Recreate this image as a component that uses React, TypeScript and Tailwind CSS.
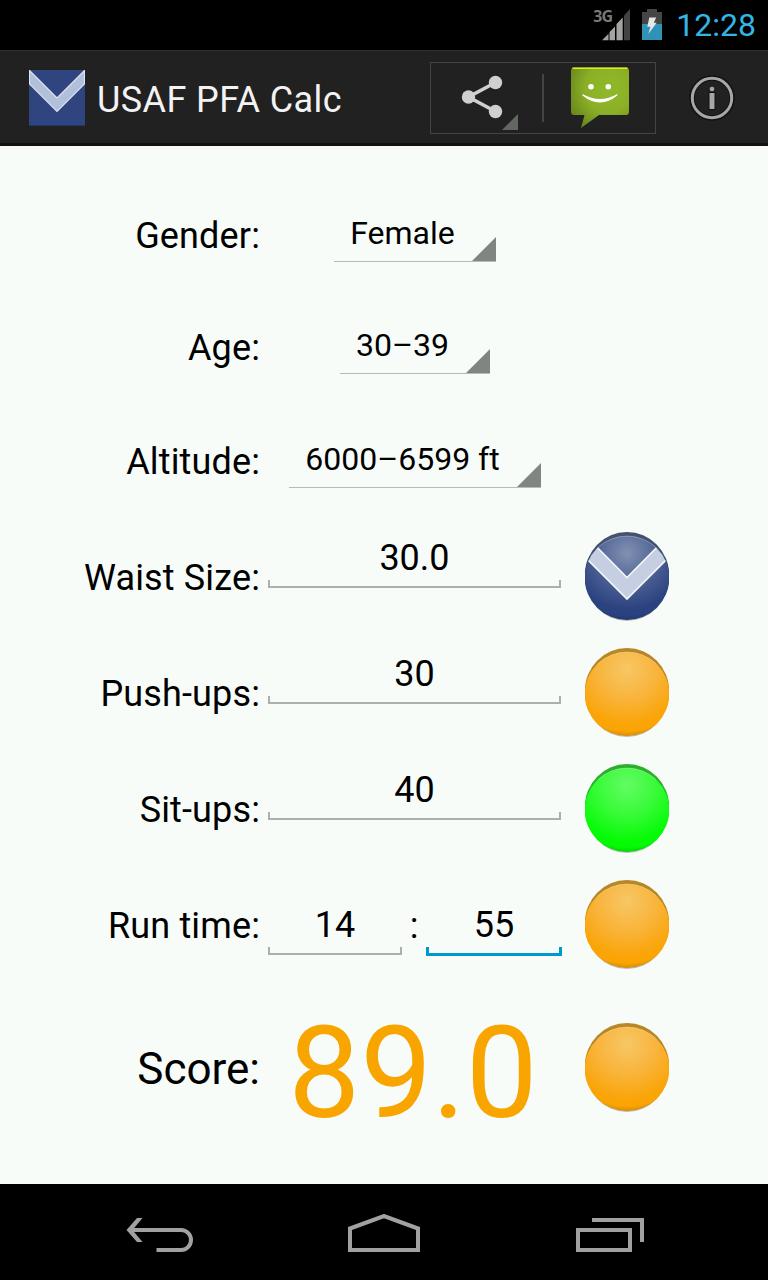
import { useId, type ReactNode } from 'react';

type Tone = 'blue' | 'orange' | 'green';

const tones = {
  blue: { rim: '#42526f', light: '#8291b1', mid: '#4e6294', base: '#2b4280', edge: '#25366a' },
  orange: { rim: '#b98724', light: '#f7c765', mid: '#f9b43b', base: '#faa405', edge: '#d98c00' },
  green: { rim: '#2cb02c', light: '#64fb64', mid: '#38fb38', base: '#05fb05', edge: '#00d600' },
};

const Orb = ({ tone }: { tone: Tone }) => {
  const id = useId();
  const c = tones[tone];
  return (
    <svg width="84" height="90" viewBox="0 0 84 90" className="block">
      <defs>
        <radialGradient id={`${id}-body`} gradientUnits="userSpaceOnUse" cx="42" cy="21" r="67">
          <stop offset="0" stopColor={c.light} />
          <stop offset="0.45" stopColor={c.mid} />
          <stop offset="0.85" stopColor={c.base} />
          <stop offset="0.93" stopColor={c.base} />
          <stop offset="1" stopColor={c.edge} />
        </radialGradient>
        <linearGradient id={`${id}-rim`} x1="0" y1="0" x2="0" y2="1">
          <stop offset="0" stopColor={c.rim} />
          <stop offset="0.25" stopColor={c.rim} />
          <stop offset="0.5" stopColor={c.edge} />
        </linearGradient>
        <clipPath id={`${id}-clip`}>
          <ellipse cx="42" cy="46" rx="42.3" ry="42" />
        </clipPath>
      </defs>
      <ellipse cx="42" cy="45.5" rx="41.5" ry="43.6" fill="#000" opacity="0.25" />
      <ellipse cx="42" cy="43.5" rx="42.3" ry="43.5" fill={`url(#${id}-rim)`} />
      <ellipse cx="42" cy="46" rx="42.3" ry="42" fill={`url(#${id}-body)`} />
      {tone === 'blue' && (
        <path
          d="M4 7 L42 45.5 L80 7 L92 17 L42 67 L-8 17 Z"
          fill="#c6cfe2"
          stroke="#f2f5fa"
          strokeWidth="1.6"
          clipPath={`url(#${id}-clip)`}
        />
      )}
      <path d="M13 15.5 A42.3 42 0 0 1 71 15.5" fill="none" stroke="#fff" strokeOpacity="0.3" strokeWidth="1" />
    </svg>
  );
};

const Spinner = ({ children }: { children: ReactNode }) => (
  <div className="flex h-[52px] items-end border-b border-[#bbb8b8] pl-4">
    <span className="mb-[9px] block text-[32px] leading-[38px] whitespace-nowrap">{children}</span>
    <svg width="24" height="24" className="ml-[17px] block shrink-0">
      <path d="M24 0V24H0Z" fill="#80857f" />
    </svg>
  </div>
);

const Field = ({ value, focused = false }: { value: string; focused?: boolean }) => (
  <div className={focused ? 'w-[136px]' : 'w-full'}>
    <div className="h-[43px] text-center text-[36px] leading-[42px]">{value}</div>
    {focused ? (
      <div className="h-[9px] border-x-[3px] border-b-[3px] border-[#0099cc]" />
    ) : (
      <div className="h-2 border-x-2 border-b-2 border-[#adafac]" />
    )}
  </div>
);

const rowClass = 'grid grid-cols-[260px_294px_84px] items-center gap-x-2';

const Label = ({ children }: { children: ReactNode }) => (
  <div className="text-right text-[36px] leading-[42px] tracking-[0.14px] whitespace-nowrap">{children}</div>
);

const SpinnerRow = ({ label, value }: { label: string; value: string }) => (
  <div className={`${rowClass} h-28`}>
    <Label>{label}</Label>
    <div className="flex justify-center">
      <Spinner>{value}</Spinner>
    </div>
  </div>
);

const EntryRow = ({ label, value, tone }: { label: string; value: string; tone: Tone }) => (
  <div className={`${rowClass} h-[116px]`}>
    <Label>{label}</Label>
    <div className="w-[293px] pb-[31px]">
      <Field value={value} />
    </div>
    <div className="ml-[15px] pb-[2px]">
      <Orb tone={tone} />
    </div>
  </div>
);

const StatusBar = () => (
  <header className="flex h-[50px] items-center justify-end bg-black pr-3">
    {/* Signal strength */}
    <div className="mr-3 flex">
      <span className="-mr-2.5 block h-[34px] w-[19px] font-['Open_Sans',sans-serif] text-[16px] leading-[17px] font-bold tracking-[-1px] text-[#777977]">
        3G
      </span>
      <svg width="28" height="34" viewBox="602 8 28 34" className="block">
        <path d="M602 40.3L608.5 33.8V40.3ZM609.5 40.3V32L615 26.5V40.3ZM616.5 40.3V24L622.7 17.5V40.3Z" fill="#a2a4a1" />
        <path d="M624 40.3V15.5L630 9V40.3Z" fill="#424342" />
      </svg>
    </div>
    {/* Battery */}
    <svg width="20" height="32" viewBox="642 9 20 32" className="mr-[14px] block">
      <path d="M647 9H657V12H662V24H642V12H647Z" fill="#444544" />
      <path d="M642 24H662V40H642Z" fill="#3092b5" />
      <path d="M649.3 17.5H656.2L653.8 22.8H656.7L648.3 34L650.5 26.7H647.3Z" fill="#e5e8e6" />
    </svg>
    <span className="text-[32px] leading-[38px] text-[#33b5e5]">12:28</span>
  </header>
);

const ActionBar = () => (
  <div className="flex h-24 items-center border-t border-b-[3px] border-t-[#2b2f2f] border-b-[#151112] bg-[#212121] pt-0.5 pl-[29px]">
    <svg width="56" height="57" viewBox="0 0 56 57" className="block">
      <path d="M0 0H56V56H0Z" fill="#304580" />
      <path d="M0 55.5H56" stroke="#20376d" />
      <path d="M0.5 0.5L28 28L55.5 0.5V14L28 41.5L0.5 14Z" fill="#b0c0da" stroke="#dfe4ef" strokeWidth="1.2" />
    </svg>
    <h1 className="ml-3 w-[333px] shrink-0 pt-1 text-[36px] leading-[42px] tracking-[0.4px] whitespace-nowrap text-[#f3f3f3]">
      USAF PFA Calc
    </h1>
    <div className="flex h-[72px] w-[226px] shrink-0 border border-[#434543]">
      {/* Share with its drop-down corner */}
      <svg width="112" height="70" viewBox="431 63 112 70" className="block">
        <path d="M495.5 82.5L468.5 97L495.5 111.5" fill="none" stroke="#cfcfcf" strokeWidth="3.6" />
        <circle cx="495.5" cy="82.5" r="6.7" fill="#cfcfcf" />
        <circle cx="468.5" cy="97" r="6.7" fill="#cfcfcf" />
        <circle cx="495.5" cy="111.5" r="6.7" fill="#cfcfcf" />
        <path d="M518 114V130H502Z" fill="#626762" />
      </svg>
      <div className="mt-[11px] -ml-px h-12 w-0.5 bg-[#434543]" />
      {/* Messaging */}
      <svg width="60" height="64" viewBox="570 66 60 64" className="mt-[3px] ml-[26px] block">
        <defs>
          <radialGradient id="msg" cx="0.65" cy="0.35" r="0.8">
            <stop offset="0" stopColor="#91b829" />
            <stop offset="0.5" stopColor="#8bb027" />
            <stop offset="1" stopColor="#65811a" />
          </radialGradient>
        </defs>
        <path d="M574 67.5H626Q629 67.5 629 71V111.5Q629 115 626 115H599L581 128L584.5 115H574Q571 115 571 111.5V71Q571 67.5 574 67.5Z" fill="url(#msg)" />
        <path d="M572.5 68.3H627.5" stroke="#dcec20" strokeWidth="1.4" />
        <circle cx="591" cy="86.7" r="2.8" fill="#fff" />
        <circle cx="608.3" cy="86.7" r="2.8" fill="#fff" />
        <path d="M582.5 94Q600 104 617.3 94V95.5Q600 109.5 582.5 95.5Z" fill="#fff" />
      </svg>
    </div>
    {/* About */}
    <svg width="46" height="46" viewBox="689 75 46 46" className="ml-[33px] block shrink-0">
      <circle cx="712" cy="98" r="20" fill="none" stroke="#111" strokeWidth="5.5" />
      <circle cx="712" cy="98" r="19.7" fill="none" stroke="#a5a6a5" strokeWidth="3" />
      <path d="M709 92.5H715V109.5H709Z" fill="#a5a6a5" stroke="#111" />
      <circle cx="712" cy="89" r="2.8" fill="#a5a6a5" stroke="#111" strokeWidth="0.8" />
    </svg>
  </div>
);

const NavBar = () => (
  <nav className="flex h-24 bg-black pt-[30px] pl-[126px]">
    <svg width="68" height="40" viewBox="126 1214 68 40" fill="none" stroke="#a1a1a1" strokeWidth="4">
      <path d="M130 1230H181A10 10 0 0 1 181 1250H156.5" />
      <path d="M126.500 1230L137 1218H142.500L132.500 1230L142.500 1242H137Z" fill="#a1a1a1" stroke="none" />
    </svg>
    <svg width="72" height="40" viewBox="348 1214 72 40" fill="none" stroke="#a1a1a1" strokeWidth="4" className="ml-[154px]">
      <path d="M350 1250V1228.500L384 1216L418 1228.500V1250Z" />
    </svg>
    <svg width="68" height="40" viewBox="576 1214 68 40" fill="none" stroke="#a1a1a1" strokeWidth="4" className="ml-[156px]">
      <path d="M578 1230H630V1250H578Z" />
      <path d="M592 1220H642V1242" />
    </svg>
  </nav>
);

const App = () => {
  return (
    <div className="flex h-[1280px] w-[768px] flex-col overflow-hidden bg-[#f8fcf9] font-[Roboto,sans-serif] text-black">
      <StatusBar />
      <ActionBar />

      <main className="flex-1 pt-[34px]">
        <SpinnerRow label="Gender:" value="Female" />
        <SpinnerRow label="Age:" value="30–39" />
        <div className="pt-0.5 pb-0.5">
          <SpinnerRow label="Altitude:" value="6000–6599 ft" />
        </div>
        <EntryRow label="Waist Size:" value="30.0" tone="blue" />
        <EntryRow label="Push-ups:" value="30" tone="orange" />
        <EntryRow label="Sit-ups:" value="40" tone="green" />

        {/* Run time, minutes and seconds */}
        <div className={`${rowClass} h-[116px]`}>
          <Label>Run time:</Label>
          <div className="flex pt-[7px]">
            <div className="w-[134px]">
              <Field value="14" />
            </div>
            <span className="w-6 text-center text-[36px] leading-[44px]">:</span>
            <Field value="55" focused />
          </div>
          <div className="ml-[15px] pb-[2px]">
            <Orb tone="orange" />
          </div>
        </div>

        <div className={`${rowClass} h-[168px]`}>
          <div className="pt-0.5 text-right text-[44px] leading-[52px]">Score:</div>
          <div className="pt-[10px] pr-1 text-center text-[128px] leading-[150px] text-[#f9a500]">89.0</div>
          <div className="ml-[15px]">
            <Orb tone="orange" />
          </div>
        </div>
      </main>

      <NavBar />
    </div>
  );
};

export default App;
